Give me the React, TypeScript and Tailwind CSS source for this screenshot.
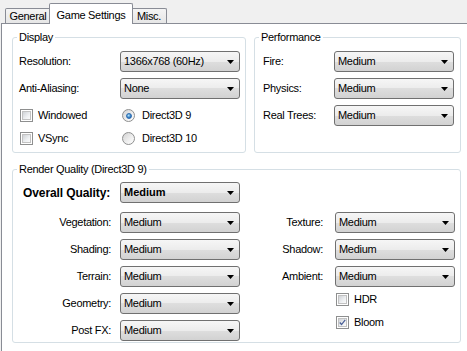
import type { ReactNode } from "react";

const FONT = "font-['Liberation_Sans',Arial,sans-serif]";

function Arrow() {
  return (
    <svg width="7" height="4" viewBox="0 0 7 4" aria-hidden>
      <path d="M0 0h7L3.5 4z" fill="#000" />
    </svg>
  );
}

function Dropdown({ value, bold }: { value: string; bold?: boolean }) {
  return (
    <div className="flex h-[21px] w-[120px] items-center justify-between rounded-[3px] border border-[#707070] bg-[linear-gradient(to_bottom,#f6f6f6_0%,#ececec_50%,#dedede_50%,#d2d2d2_100%)] pl-[3px] pr-[5px]">
      <span className={bold ? "font-bold tracking-normal" : ""}>{value}</span>
      <Arrow />
    </div>
  );
}

function Check({ label, checked }: { label: string; checked?: boolean }) {
  return (
    <div className="flex h-[23px] items-center gap-[5px] pl-[1px]">
      <span className="flex h-[13px] w-[13px] items-center justify-center border border-[#8e8f8f] bg-white">
        <span className="flex h-[9px] w-[9px] items-center justify-center border border-[#c2c2c2] bg-[linear-gradient(135deg,#cfd2d6_0%,#eef0f2_60%,#fbfbfb_100%)]">
          {checked && (
            <svg width="9" height="9" viewBox="0 0 9 9" aria-hidden>
              <path d="M1 4.5l2.3 2.6L8 1" fill="none" stroke="#4a5f97" strokeWidth="1.6" />
            </svg>
          )}
        </span>
      </span>
      <span>{label}</span>
    </div>
  );
}

function Radio({ label, checked }: { label: string; checked?: boolean }) {
  return (
    <div className="flex h-[23px] items-center gap-[7px] pl-[2px]">
      <span className="flex h-[13px] w-[13px] items-center justify-center rounded-full border border-[#8e8f8f] bg-[linear-gradient(135deg,#d2d2d2_0%,#f0f0f0_60%,#ffffff_100%)]">
        {checked && (
          <span className="h-[6px] w-[6px] rounded-full border border-[#2c6bb0] bg-[radial-gradient(circle_at_40%_35%,#b5e6fb_0%,#3f86c8_55%,#1a4f93_100%)]" />
        )}
      </span>
      <span>{label}</span>
    </div>
  );
}

function Group({ title, className, children }: { title: string; className: string; children: ReactNode }) {
  return (
    <fieldset className={`rounded-[3px] border border-[#d5dfe5] ${className}`}>
      <legend className="ml-[4px] px-[2px] leading-[13px]">{title}</legend>
      {children}
    </fieldset>
  );
}

function Tab({ label, selected, width }: { label: string; selected?: boolean; width: string }) {
  if (selected) {
    return (
      <div
        className={`relative z-10 -mb-px -ml-[2px] flex h-[21px] items-start justify-center rounded-t-[2px] border-x border-t border-[#898c95] bg-white pt-[3px] ${width}`}
      >
        {label}
      </div>
    );
  }
  return (
    <div
      className={`flex h-[15px] items-center justify-center rounded-t-[2px] border-x border-t border-[#898c95] bg-[linear-gradient(to_bottom,#f4f4f4,#e6e6e6)] pt-[1px] ${width}`}
    >
      {label}
    </div>
  );
}

const renderLeft = ["Vegetation:", "Shading:", "Terrain:", "Geometry:", "Post FX:"];
const renderRight = ["Texture:", "Shadow:", "Ambient:"];

export default function App() {
  return (
    <div className={`${FONT} h-[351px] w-[467px] overflow-hidden bg-[#f0f0f0] text-[11px] tracking-[-0.3px] text-black`}>
      <div className="flex h-[23px] items-end pl-[5px]">
        <Tab label="General" width="w-[46px]" />
        <Tab label="Game Settings" width="w-[84px]" selected />
        <div className="-ml-[2px] flex">
          <Tab label="Misc." width="w-[36px]" />
        </div>
      </div>

      <div className="ml-[1px] h-[340px] w-[480px] border-l border-t border-[#898c95] bg-white pl-[10px] pt-[7px]">
        <div className="flex gap-[8px]">
          <Group title="Display" className="w-[234px]">
            <div className="flex flex-col gap-[6px] pl-[6px] pt-[7px]">
              <div className="flex items-center">
                <span className="w-[101px]">Resolution:</span>
                <Dropdown value="1366x768 (60Hz)" />
              </div>
              <div className="flex items-center">
                <span className="w-[101px]">Anti-Aliasing:</span>
                <Dropdown value="None" />
              </div>
            </div>
            <div className="mt-[5px] grid grid-cols-[101px_1fr] pb-[2px] pl-[6px]">
              <Check label="Windowed" />
              <Radio label="Direct3D 9" checked />
              <Check label="VSync" />
              <Radio label="Direct3D 10" />
            </div>
          </Group>

          <Group title="Performance" className="w-[207px]">
            <div className="flex flex-col gap-[6px] pl-[8px] pt-[7px]">
              {["Fire:", "Physics:", "Real Trees:"].map((l) => (
                <div key={l} className="flex items-center">
                  <span className="w-[71px]">{l}</span>
                  <Dropdown value="Medium" />
                </div>
              ))}
            </div>
          </Group>
        </div>

        <Group title="Render Quality (Direct3D 9)" className="mt-[10px] w-[449px]">
          <div className="flex items-center pl-[10px] pt-[6px]">
            <span className="w-[97px] text-[12px] font-bold tracking-[-0.1px]">Overall Quality:</span>
            <Dropdown value="Medium" bold />
          </div>
          <div className="mt-[9px] flex pb-[1px]">
            <div className="flex w-[227px] flex-col gap-[6px]">
              {renderLeft.map((l) => (
                <div key={l} className="flex items-center">
                  <span className="w-[107px] pr-[9px] text-right">{l}</span>
                  <Dropdown value="Medium" />
                </div>
              ))}
            </div>
            <div className="flex w-[215px] flex-col">
              <div className="flex flex-col gap-[6px]">
                {renderRight.map((l) => (
                  <div key={l} className="flex items-center">
                    <span className="w-[95px] pr-[12px] text-right">{l}</span>
                    <Dropdown value="Medium" />
                  </div>
                ))}
              </div>
              <div className="mt-[1px] pl-[95px]">
                <Check label="HDR" />
                <Check label="Bloom" checked />
              </div>
            </div>
          </div>
        </Group>
      </div>
    </div>
  );
}
